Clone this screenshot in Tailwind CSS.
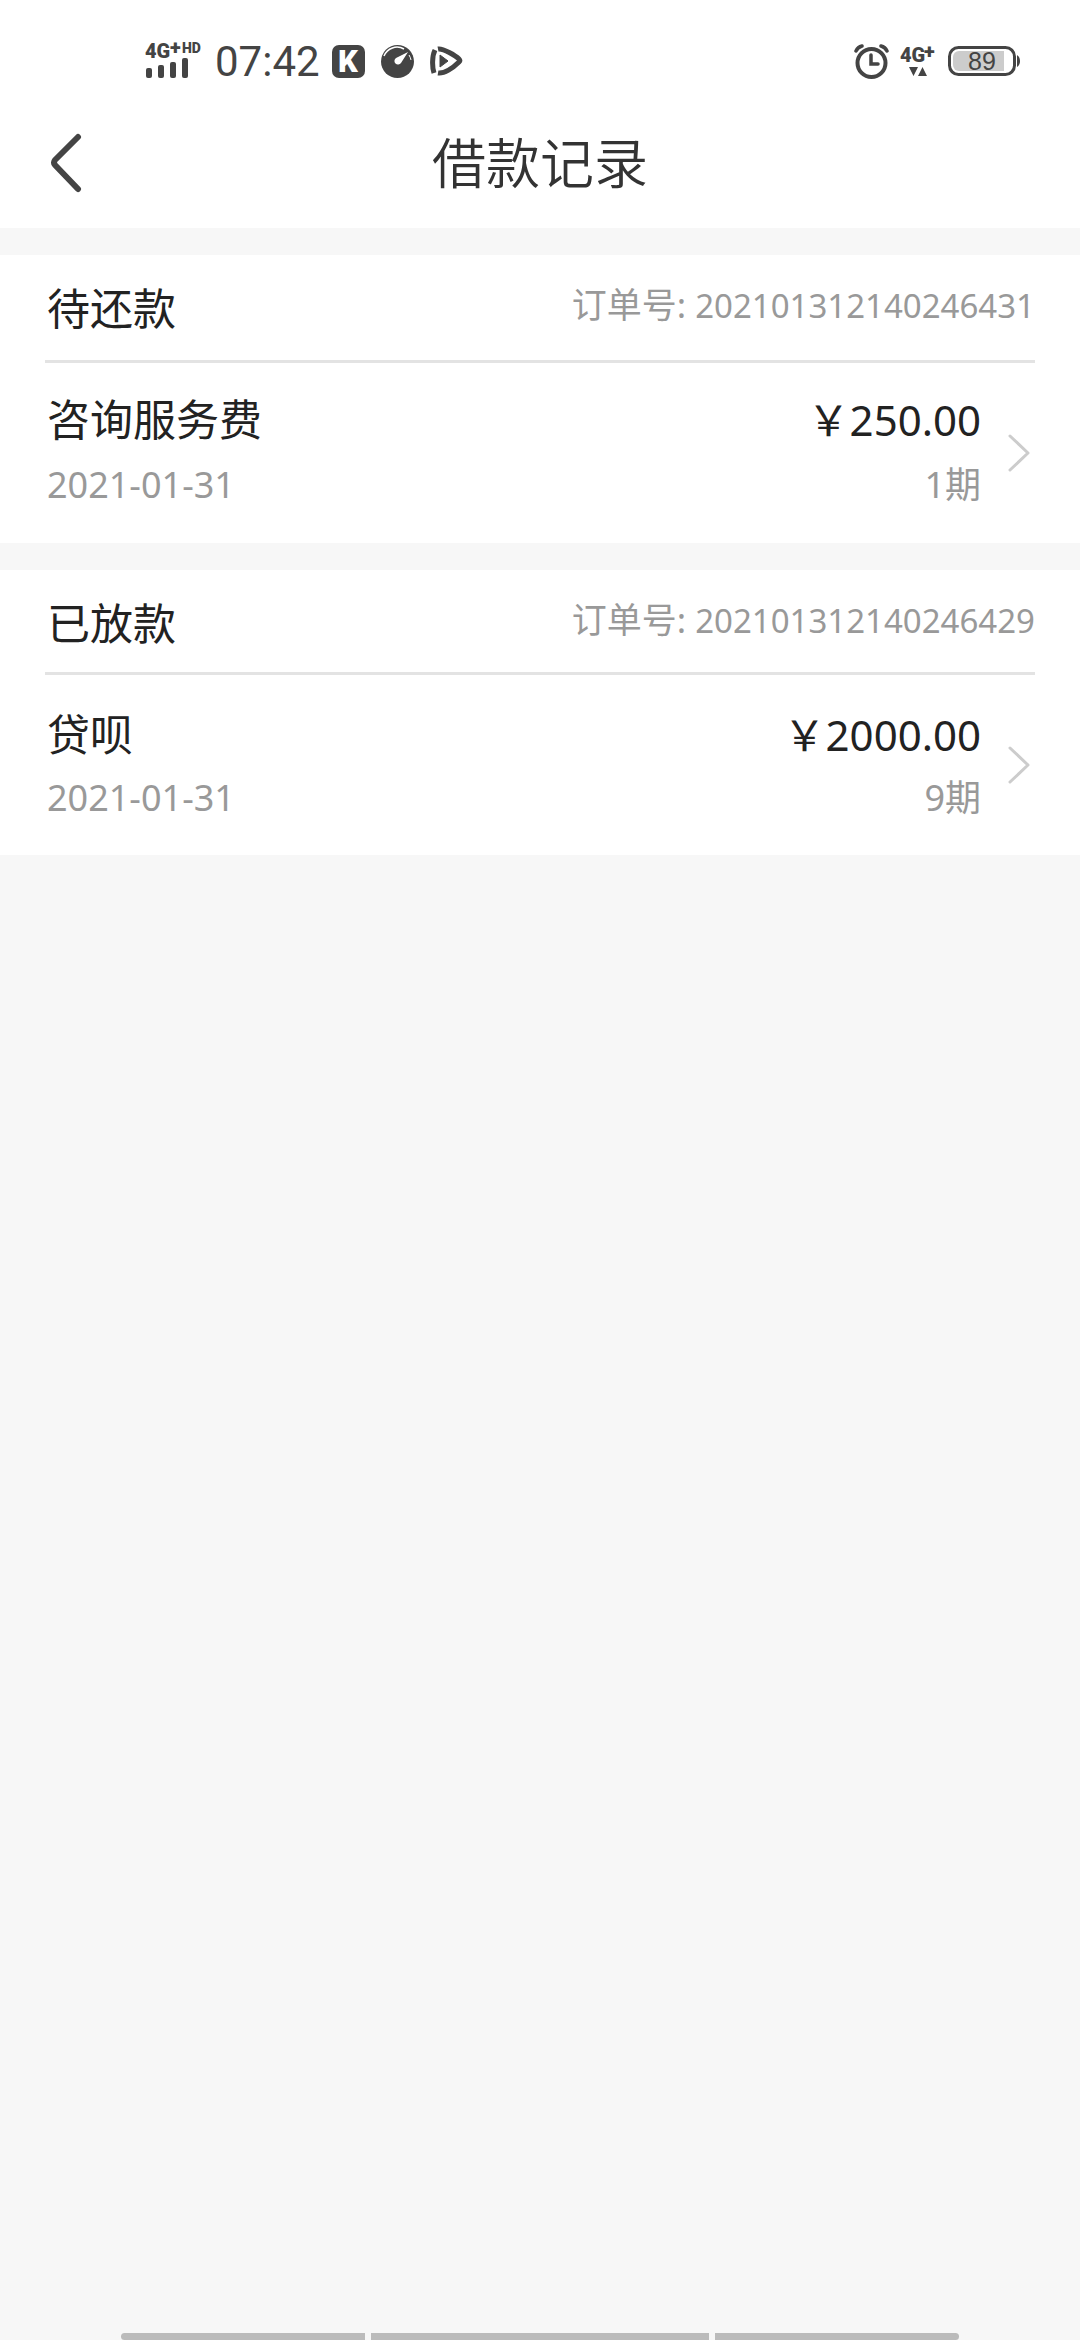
<!DOCTYPE html>
<html lang="zh-CN">
<head>
    <meta charset="UTF-8">
    <meta name="viewport" content="width=device-width, initial-scale=1.0">
    <title>借款记录</title>
    <script src="https://cdn.jsdelivr.net/npm/@tailwindcss/browser@4"></script>
</head>
<body class="flex min-h-screen flex-col bg-[#f7f7f7] font-['Noto_Sans','Noto_Sans_CJK_SC',sans-serif] text-[#222]">

    <!-- Status Bar -->
    <div class="flex h-[98px] items-center justify-between bg-white pt-6 pr-[60px] pl-[145px] text-[#444]">
        <div class="flex items-center">
            <svg class="h-[52px] w-[60px]" viewBox="0 -8 60 52" fill="currentColor">
                <text x="0" y="15" font-family="Roboto, sans-serif" font-size="20" font-weight="900">4G</text>
                <text x="25" y="11" font-family="Roboto, sans-serif" font-size="20" font-weight="900">+</text>
                <text x="37" y="10" font-family="Roboto, sans-serif" font-size="14" font-weight="900">HD</text>
                <rect x="1" y="25" width="6" height="10" rx="2"/>
                <rect x="13" y="22" width="6" height="13" rx="2"/>
                <rect x="25" y="19" width="6" height="16" rx="2"/>
                <rect x="37" y="15" width="6" height="20" rx="2"/>
            </svg>
            <span class="ml-2.5 w-[104px] pt-0.5 font-['Roboto',sans-serif] text-[42px] leading-[50px]">07:42</span>
            <svg class="ml-[13px] size-[33px]" viewBox="0 0 33 33">
                <rect width="33" height="33" rx="7" fill="currentColor"/>
                <text x="6" y="27" font-family="Roboto, sans-serif" font-size="31" font-weight="900" fill="#fff">K</text>
            </svg>
            <svg class="ml-4 size-[33px]" viewBox="0 0 33 33">
                <circle cx="16.5" cy="16.5" r="16.5" fill="currentColor"/>
                <path d="M3 11A14 14 0 0 1 23 4" fill="none" stroke="#fff" stroke-width="1.5"/>
                <path d="M27 7 20 18a3.600 3.600 0 1 1-5-5Z" fill="#fff"/>
                <path d="M28 10a13 13 0 0 1 2 5" fill="none" stroke="#fff" stroke-width="1"/>
            </svg>
            <svg class="ml-4 h-[33px] w-[34px]" viewBox="0 0 34 33" fill="none" stroke="currentColor" stroke-linejoin="round">
                <path d="M8 4C13 3 26 11 29 14c1 1 1 2 0 3C23 23 14 29 8 28" stroke-width="5"/>
                <path d="M5 5C2 11 2 22 4 28" stroke-width="5"/>
                <path d="M10 10v12l8-6Z" fill="currentColor" stroke-width="1"/>
            </svg>
        </div>
        <div class="flex items-center">
            <svg class="h-9 w-[35px]" viewBox="0 0 35 36" fill="none" stroke="currentColor" stroke-linecap="round">
                <circle cx="17.5" cy="20" r="14" stroke-width="4"/>
                <path d="M17 12v9h7" stroke-width="3.5"/>
                <path d="M2 8a9 9 0 0 1 6-5M33 8a9 9 0 0 0-6-5" stroke-width="3.5"/>
            </svg>
            <svg class="ml-[11px] h-11 w-9" viewBox="0 -6 36 44" fill="currentColor">
                <text x="0" y="17" font-family="Roboto, sans-serif" font-size="20" font-weight="900">4G</text>
                <text x="24" y="13" font-family="Roboto, sans-serif" font-size="20" font-weight="900">+</text>
                <path d="M9 22h9l-4.500 9ZM18 31h9l-4.500-9Z"/>
            </svg>
            <svg class="ml-3 h-[30px] w-[72px]" viewBox="0 0 72 30">
                <path d="M11 5h45v20H11a6 6 0 0 1-6-6v-8a6 6 0 0 1 6-6Z" fill="#ccc"/>
                <rect x="1.5" y="1.5" width="65" height="27" rx="9" fill="none" stroke="currentColor" stroke-width="3"/>
                <path d="M69 9q3 2 3 6t-3 6Z" fill="currentColor"/>
                <text x="34" y="24" text-anchor="middle" font-family="Liberation Sans, sans-serif" font-size="25" fill="currentColor">89</text>
            </svg>
        </div>
    </div>

    <!-- Page Header -->
    <header class="grid h-[130px] grid-cols-[1fr_auto_1fr] items-center bg-white px-[45px]">
        <button type="button" aria-label="返回" class="justify-self-start">
            <svg class="h-[60px] w-10" viewBox="0 0 40 60" fill="none" stroke="#444" stroke-width="6" stroke-linecap="round" stroke-linejoin="round">
                <path d="M33 4 10 27q-2 2.500 0 5l23 24"/>
            </svg>
        </button>
        <h1 class="text-[54px] leading-[60px] font-[350] text-[#333]">借款记录</h1>
    </header>

    <!-- Loan Records -->
    <main class="mt-[27px] flex flex-1 flex-col gap-[27px]">
        <section class="bg-white px-[45px]">
            <div class="flex h-[108px] items-start justify-between border-b-3 border-[#e3e3e3] pt-6 pl-0.5">
                <h2 class="text-[43px] leading-[60px]">待还款</h2>
                <p class="text-[35px] leading-[52px] text-[#999]">订单号: <span class="text-[33px]">202101312140246431</span></p>
            </div>
            <a href="#" class="flex h-[180px] items-center pl-0.5">
                <div class="flex-1 pb-1">
                    <p class="text-[43px] leading-[66px]">咨询服务费</p>
                    <p class="mt-0.5 text-[36px] leading-[60px] text-[#999]">2021-01-31</p>
                </div>
                <div class="pb-1 text-right">
                    <p class="text-[42px] leading-[66px]">￥250.00</p>
                    <p class="mt-0.5 text-[36px] leading-[60px] text-[#999]">1期</p>
                </div>
                <svg class="ml-[26px] h-10 w-7" viewBox="0 0 28 40" fill="none" stroke="#ccc" stroke-width="3" stroke-linecap="round" stroke-linejoin="round">
                    <path d="M3 3l18 17L3 37"/>
                </svg>
            </a>
        </section>

        <section class="bg-white px-[45px]">
            <div class="flex h-[105px] items-start justify-between border-b-3 border-[#e3e3e3] pt-6 pl-0.5">
                <h2 class="text-[43px] leading-[60px]">已放款</h2>
                <p class="text-[35px] leading-[52px] text-[#999]">订单号: <span class="text-[33px]">202101312140246429</span></p>
            </div>
            <a href="#" class="flex h-[180px] items-center pl-0.5">
                <div class="flex-1">
                    <p class="text-[43px] leading-[66px]">贷呗</p>
                    <p class="text-[36px] leading-[60px] text-[#999]">2021-01-31</p>
                </div>
                <div class="text-right">
                    <p class="text-[42px] leading-[66px]">￥2000.00</p>
                    <p class="text-[36px] leading-[60px] text-[#999]">9期</p>
                </div>
                <svg class="ml-[26px] h-10 w-7" viewBox="0 0 28 40" fill="none" stroke="#ccc" stroke-width="3" stroke-linecap="round" stroke-linejoin="round">
                    <path d="M3 3l18 17L3 37"/>
                </svg>
            </a>
        </section>
    </main>

    <!-- Gesture Bar -->
    <div class="flex h-[7px] gap-1.5 px-[121px]">
        <div class="flex-[244] rounded-l-full bg-[#bbb]"></div>
        <div class="flex-[338] bg-[#bbb]"></div>
        <div class="flex-[244] rounded-r-full bg-[#bbb]"></div>
    </div>
</body>
</html>
